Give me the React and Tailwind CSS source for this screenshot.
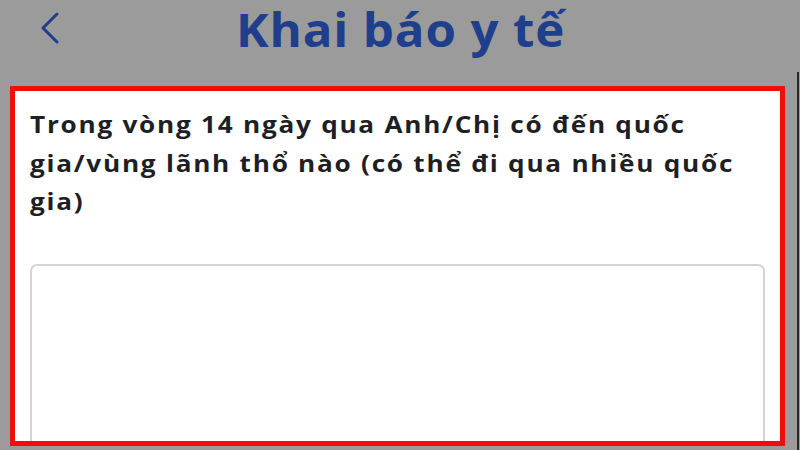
import React from 'react'

const BackIcon = () => (
  <svg width="20" height="32" viewBox="0 0 20 32" fill="none">
    <path
      d="M17 2 L3 16 L17 30"
      stroke="#1f3f8c"
      strokeWidth="3"
      strokeLinecap="round"
      strokeLinejoin="round"
    />
  </svg>
)

const App = () => {
  return (
    <div className="w-[800px] h-[450px] bg-[#9b9b9b] flex flex-col overflow-hidden font-['Open_Sans',sans-serif]">
      <div className="h-[72px] flex items-start shrink-0">
        <div className="pl-[40px] pt-[12px] w-[236px]">
          <BackIcon />
        </div>
        <h1 className="text-[46px] leading-[62px] font-bold text-[#1f3f8c] tracking-[0.8px] whitespace-nowrap origin-left scale-x-[1.07] -translate-y-[2px]">
          Khai báo y tế
        </h1>
      </div>

      <div className="flex-1 flex">
        <div className="pl-[10px] pt-[14px]">
          <div className="w-[775px] h-[360px] border-[5px] border-[#f20d0d] bg-white overflow-hidden px-[15px] pt-[14px]">
            <p className="text-[24px] leading-[38.5px] font-bold text-[#1e1f24] tracking-[1.6px] whitespace-nowrap origin-left scale-x-[1.09]">
              Trong vòng 14 ngày qua Anh/Chị có đến quốc
              <br />
              gia/vùng lãnh thổ nào (có thể đi qua nhiều quốc
              <br />
              gia)
            </p>
            <div className="mt-[43px] h-[240px] border-2 border-[#d4d4d4] rounded-[7px] bg-white" />
          </div>
        </div>
        <div className="ml-[12px] w-[2px] bg-[#2a2a2a]" />
      </div>
    </div>
  )
}

export default App
